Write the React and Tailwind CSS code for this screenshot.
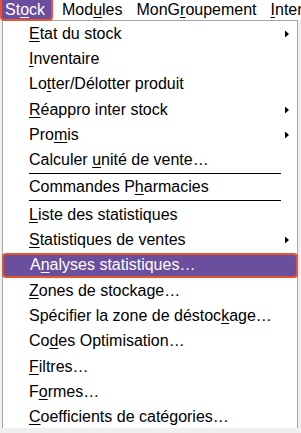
import React from 'react';

const MENUBAR = [
  { pre: 'St', u: 'o', post: 'ck', active: true },
  { pre: 'Mod', u: 'u', post: 'les', pad: 'pl-[9px] pr-[7px]' },
  { pre: 'MonG', u: 'r', post: 'oupement', pad: 'px-[7px]' },
  { pre: '', u: 'I', post: 'nter', pad: 'px-[7px]' },
];

const ITEMS = [
  { pre: '', u: 'E', post: 'tat du stock', sub: true },
  { pre: '', u: 'I', post: 'nventaire' },
  { pre: 'Lo', u: 't', post: 'ter/Délotter produit' },
  { pre: '', u: 'R', post: 'éappro inter stock', sub: true },
  { pre: 'Pro', u: 'm', post: 'is', sub: true },
  { pre: 'Calculer ', u: 'u', post: 'nité de vente…' },
  { sep: true },
  { pre: 'Commandes P', u: 'h', post: 'armacies' },
  { sep: true },
  { pre: '', u: 'L', post: 'iste des statistiques' },
  { pre: '', u: 'S', post: 'tatistiques de ventes', sub: true },
  { pre: 'A', u: 'n', post: 'alyses statistiques…', active: true },
  { pre: '', u: 'Z', post: 'ones de stockage…' },
  { pre: 'Spécifier la zone de déstoc', u: 'k', post: 'age…' },
  { pre: 'Co', u: 'd', post: 'es Optimisation…' },
  { pre: '', u: 'F', post: 'iltres…' },
  { pre: 'F', u: 'o', post: 'rmes…' },
  { pre: '', u: 'C', post: 'oefficients de catégories…' },
];

function Label({ item }) {
  return (
    <span className="whitespace-pre">
      {item.pre}
      <span className="underline underline-offset-[2px] decoration-1">{item.u}</span>
      {item.post}
    </span>
  );
}

function Arrow() {
  return (
    <svg width="4" height="7" viewBox="0 0 4 7" className="absolute right-[8px] top-1/2 -translate-y-1/2">
      <path d="M0 0 L4 3.5 L0 7 Z" fill="#000" />
    </svg>
  );
}

export default function App() {
  return (
    <div
      className="w-[301px] h-[433px] bg-[#f0f0f0] overflow-hidden flex flex-col text-[16px] text-black"
      style={{ fontFamily: '"Liberation Sans", Arial, sans-serif' }}
    >
      <div className="h-[20px] bg-white flex items-stretch shrink-0">
        {MENUBAR.map((m) =>
          m.active ? (
            <div
              key={m.u}
              className="w-[53px] h-[21px] shrink-0 bg-[#6b4e9e] text-white border-2 border-t-0 border-[#e8552b] rounded-b-[4px] flex items-center pl-[3px] z-10 leading-none"
            >
              <Label item={m} />
            </div>
          ) : (
            <div key={m.u} className={`${m.pad} shrink-0 flex items-center leading-none`}>
              <Label item={m} />
            </div>
          )
        )}
      </div>

      <div className="ml-[2px] w-[296px] h-[408px] bg-white border border-b-0 border-[#a6a6a6] shrink-0">
        {ITEMS.map((item, i) =>
          item.sep ? (
            <div key={i} className="h-[2px] flex items-start pl-[26px] pr-[16px]">
              <div className="h-px w-full bg-black" />
            </div>
          ) : item.active ? (
            <div
              key={i}
              className="relative h-[25.3px] -mx-[1px] bg-[#6b4e9e] text-white border-2 border-[#e8552b] rounded-[4px] flex items-center pl-[26px] leading-none"
            >
              <Label item={item} />
            </div>
          ) : (
            <div key={i} className="relative h-[25.3px] flex items-center pl-[26px] leading-none">
              <Label item={item} />
              {item.sub && <Arrow />}
            </div>
          )
        )}
      </div>
    </div>
  );
}
